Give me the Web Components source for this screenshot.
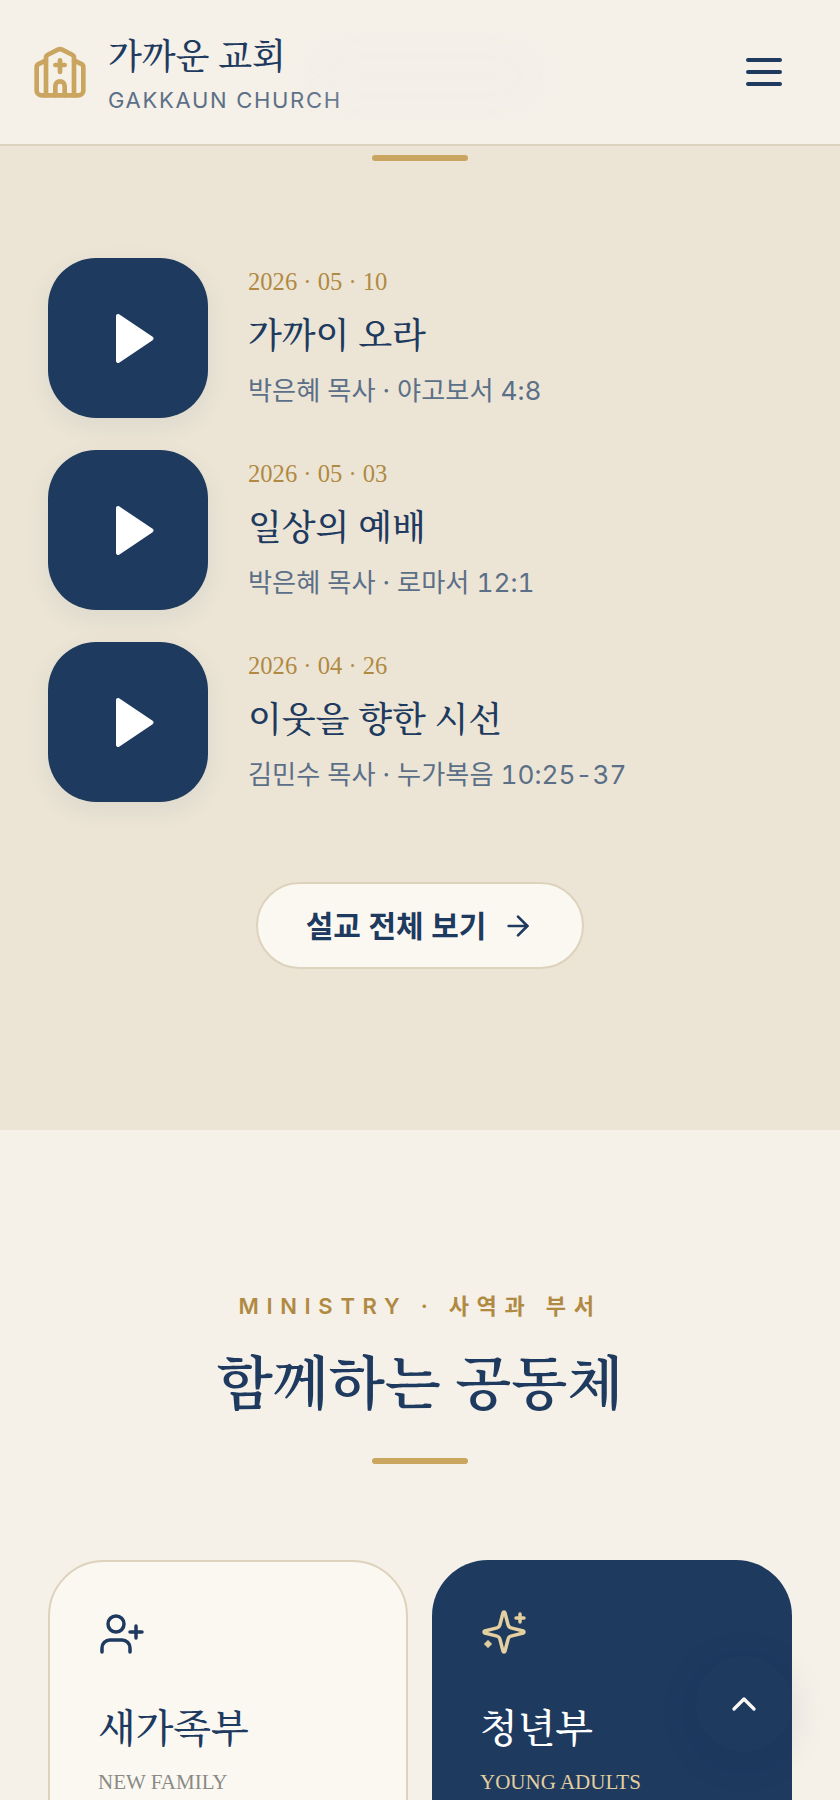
<!DOCTYPE html>
<html lang="ko">
<head>
<meta charset="utf-8">
<title>가까운 교회</title>
<style>
  html, body { margin: 0; padding: 0; background: #f5f0e8; }
  body { height: 1800px; overflow: hidden; position: relative; font-family: Inter, "Noto Sans CJK KR", sans-serif; }
</style>
</head>
<body>
<site-header></site-header>

<sermon-section>
  <sermon-item date="2026 · 05 · 10" title="가까이 오라" meta="박은혜 목사 · 야고보서 4:8"></sermon-item>
  <sermon-item date="2026 · 05 · 03" title="일상의 예배" meta="박은혜 목사 · 로마서 12:1"></sermon-item>
  <sermon-item date="2026 · 04 · 26" title="이웃을 향한 시선" meta="김민수 목사 · 누가복음 10:25-37"></sermon-item>
  <pill-link slot="action">설교 전체 보기</pill-link>
</sermon-section>

<ministry-section>
  <ministry-card icon="user-plus" title="새가족부" sub="NEW FAMILY"></ministry-card>
  <ministry-card dark icon="sparkles" title="청년부" sub="YOUNG ADULTS"></ministry-card>
</ministry-section>

<back-top></back-top>

<script>
const SERIF = '"Liberation Serif", "Noto Serif CJK KR", "Noto Serif KR", serif';

const ICONS = {
  church: '<path d="M10 9h4"/><path d="M12 7v5"/><path d="M14 22v-4a2 2 0 0 0-4 0v4"/><path d="M18 22V5.618a1 1 0 0 0-.553-.894l-4.553-2.277a2 2 0 0 0-1.788 0L6.553 4.724A1 1 0 0 0 6 5.618V22"/><path d="m18 7 3.447 1.724a1 1 0 0 1 .553.894V20a2 2 0 0 1-2 2H4a2 2 0 0 1-2-2V9.618a1 1 0 0 1 .553-.894L6 7"/>',
  'arrow-right': '<path d="M5 12h14"/><path d="m12 5 7 7-7 7"/>',
  'user-plus': '<path d="M16 21v-2a4 4 0 0 0-4-4H6a4 4 0 0 0-4 4v2"/><circle cx="9" cy="7" r="4"/><path d="M19 8v6"/><path d="M22 11h-6"/>',
  sparkles: '<path d="M9.937 15.5A2 2 0 0 0 8.5 14.063l-6.135-1.582a.5.5 0 0 1 0-.962L8.5 9.936A2 2 0 0 0 9.937 8.5l1.582-6.135a.5.5 0 0 1 .963 0L14.063 8.5A2 2 0 0 0 15.5 9.937l6.135 1.581a.5.5 0 0 1 0 .964L15.5 14.063a2 2 0 0 0-1.437 1.437l-1.582 6.135a.5.5 0 0 1-.963 0z"/><path d="M20 3v4"/><path d="M22 5h-4"/><path d="M4 17v2"/><path d="M5 18H3"/>',
  'chevron-up': '<path d="m18 15-6-6-6 6"/>'
};

class LineIcon extends HTMLElement {
  connectedCallback() {
    const size = this.getAttribute('size') || 24;
    const stroke = this.getAttribute('stroke') || 1.75;
    this.attachShadow({ mode: 'open' }).innerHTML = `
      <style>
        :host { display: block; width: ${size}px; height: ${size}px; flex: none; }
        svg { display: block; }
      </style>
      <svg width="${size}" height="${size}" viewBox="0 0 24 24" fill="none" stroke="currentColor"
        stroke-width="${stroke}" stroke-linecap="round" stroke-linejoin="round">${ICONS[this.getAttribute('name')]}</svg>`;
  }
}

class GoldBar extends HTMLElement {
  connectedCallback() {
    this.attachShadow({ mode: 'open' }).innerHTML = `
      <style>
        :host { display: block; width: 96px; height: 6px; border-radius: 3px; background: #c9a55f; margin: 0 auto; }
      </style>`;
  }
}

class SiteHeader extends HTMLElement {
  connectedCallback() {
    this.attachShadow({ mode: 'open' }).innerHTML = `
      <style>
        :host { display: flex; align-items: center; justify-content: space-between; height: 144px; position: relative;
          padding: 0 32px; background: #f5f0e8; border-bottom: 2px solid #ddd2bc; }
        .brand { display: flex; align-items: center; gap: 20px; }
        line-icon { color: #c9a55f; }
        .name { font: 500 35px/1.2 ${SERIF}; color: #1e3a5f; margin-top: 6.5px; }
        .en { font: 400 22px/1.2 Inter, sans-serif; letter-spacing: 1.7px; color: #5b6f87; margin-top: 8.5px; }
        .menu { width: 88px; display: flex; flex-direction: column; align-items: center; gap: 8px; }
        .menu i { display: block; width: 36px; height: 4px; border-radius: 2px; background: #1e3a5f; }
        .smudge { position: absolute; left: 310px; top: 48px; width: 230px; height: 56px; border-radius: 28px;
          background: rgba(238, 238, 238, .22); filter: blur(18px); }
      </style>
      <div class="smudge"></div>
      <div class="brand">
        <line-icon name="church" size="56" stroke="2"></line-icon>
        <div>
          <div class="name">가까운 교회</div>
          <div class="en">GAKKAUN CHURCH</div>
        </div>
      </div>
      <div class="menu"><i></i><i></i><i></i></div>`;
  }
}

class SermonSection extends HTMLElement {
  connectedCallback() {
    this.attachShadow({ mode: 'open' }).innerHTML = `
      <style>
        :host { display: block; height: 984px; box-sizing: border-box; padding: 9px 48px 0; background: #ece5d6; }
        .list { display: flex; flex-direction: column; gap: 32px; margin-top: 97px; }
        .action { display: flex; justify-content: center; margin-top: 80px; }
      </style>
      <gold-bar></gold-bar>
      <div class="list"><slot></slot></div>
      <div class="action"><slot name="action"></slot></div>`;
  }
}

class SermonItem extends HTMLElement {
  connectedCallback() {
    this.attachShadow({ mode: 'open' }).innerHTML = `
      <style>
        :host { display: flex; align-items: flex-start; gap: 40px; }
        .tile { width: 160px; height: 160px; flex: none; border-radius: 48px; background: #1e3a5f;
          box-shadow: 0 8px 24px rgba(30, 58, 95, .08); display: flex; align-items: center; justify-content: center; }
        .tile svg { margin-left: 14px; }
        .text { padding-top: 7px; }
        .date { font: 400 24.6px/34px ${SERIF}; color: #b08a42; }
        .title { font: 500 35px/46px ${SERIF}; color: #1e3a5f; margin-top: 14.5px; }
        .meta { font: 400 26.2px/34px Inter, "Noto Sans CJK KR", sans-serif; font-variant-numeric: tabular-nums; color: #5b6f87; margin-top: 14.5px; }
      </style>
      <div class="tile">
        <svg width="38" height="49" viewBox="0 0 38 49"><path d="M2 2 35.500 24.500 2 47z" fill="#fff" stroke="#fff" stroke-width="4" stroke-linejoin="round"/></svg>
      </div>
      <div class="text">
        <div class="date">${this.getAttribute('date')}</div>
        <div class="title">${this.getAttribute('title')}</div>
        <div class="meta">${this.getAttribute('meta')}</div>
      </div>`;
  }
}

class PillLink extends HTMLElement {
  connectedCallback() {
    this.attachShadow({ mode: 'open' }).innerHTML = `
      <style>
        :host { display: inline-flex; align-items: center; gap: 16px; box-sizing: border-box; height: 87px; width: 328px;
          justify-content: center; border: 2px solid #ddd2bc; border-radius: 44px; background: #fbf8f2;
          color: #1e3a5f; font: 600 30px/1.2 Inter, "Noto Sans CJK KR", sans-serif; }
      </style>
      <slot></slot><line-icon name="arrow-right" size="32" stroke="2"></line-icon>`;
  }
}

class MinistrySection extends HTMLElement {
  connectedCallback() {
    this.attachShadow({ mode: 'open' }).innerHTML = `
      <style>
        :host { display: block; padding: 163px 48px 0; background: #f5f0e8; text-align: center; }
        .label { font: 600 22px/1.2 Inter, "Noto Sans CJK KR", sans-serif; letter-spacing: 7.7px; color: #b08a42; }
        h2 { margin: 28px 0 0; font: 600 58px/1.3 ${SERIF}; color: #1e3a5f; }
        gold-bar { margin-top: 35px; }
        .grid { display: grid; grid-template-columns: 1fr 1fr; gap: 24px; margin-top: 96px; text-align: left; }
      </style>
      <div class="label">MINISTRY · 사역과 부서</div>
      <h2>함께하는 공동체</h2>
      <gold-bar></gold-bar>
      <div class="grid"><slot></slot></div>`;
  }
}

class MinistryCard extends HTMLElement {
  connectedCallback() {
    this.attachShadow({ mode: 'open' }).innerHTML = `
      <style>
        :host { display: block; box-sizing: border-box; min-height: 400px; padding: 48px; border-radius: 56px;
          border: 2px solid #ddd2bc; background: #fbf8f2; color: #1e3a5f; }
        :host([dark]) { background: #1e3a5f; border: 0; color: #fff; }
        :host([dark]) line-icon, :host([dark]) .sub { color: #e3cf9f; }
        :host([dark]) .title { margin-top: 48px; }
        .title { font: 500 39px/1.3 ${SERIF}; margin-top: 46px; }
        .sub { font: 400 21px/1.3 ${SERIF}; color: #8a8a86; margin-top: 15px; }
      </style>
      <line-icon name="${this.getAttribute('icon')}" size="48"></line-icon>
      <div class="title">${this.getAttribute('title')}</div>
      <div class="sub">${this.getAttribute('sub')}</div>`;
  }
}

class BackTop extends HTMLElement {
  connectedCallback() {
    this.attachShadow({ mode: 'open' }).innerHTML = `
      <style>
        :host { position: absolute; right: 48px; bottom: 48px; width: 96px; height: 96px; border-radius: 50%;
          background: #1e3a5f; color: #fbf8f2; display: flex; align-items: center; justify-content: center;
          box-shadow: 0 8px 40px rgba(15, 30, 55, .1); }
      </style>
      <line-icon name="chevron-up" size="40" stroke="2"></line-icon>`;
  }
}

customElements.define('line-icon', LineIcon);
customElements.define('gold-bar', GoldBar);
customElements.define('site-header', SiteHeader);
customElements.define('sermon-section', SermonSection);
customElements.define('sermon-item', SermonItem);
customElements.define('pill-link', PillLink);
customElements.define('ministry-section', MinistrySection);
customElements.define('ministry-card', MinistryCard);
customElements.define('back-top', BackTop);
</script>
</body>
</html>
